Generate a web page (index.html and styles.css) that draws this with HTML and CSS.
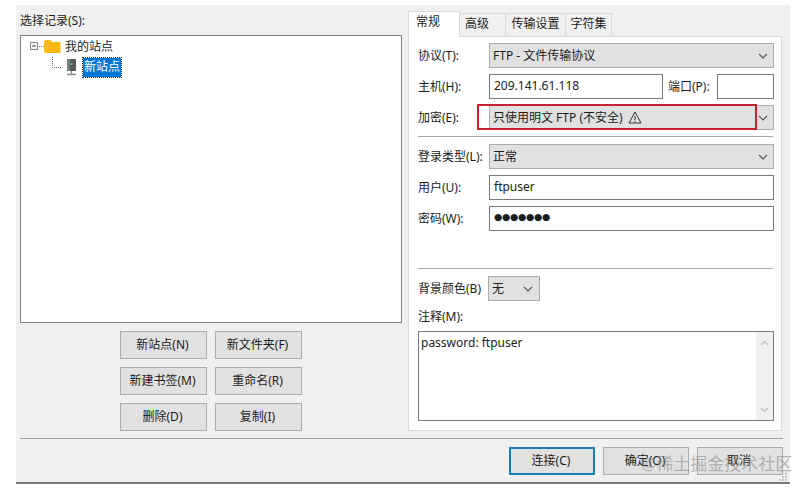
FILE: index.html
```html
<!DOCTYPE html>
<html lang="zh">
<head>
<meta charset="utf-8">
<title>站点管理器</title>
<link rel="stylesheet" href="styles.css">
</head>
<body>
<div class="window">
  <div class="main">
    <section class="left">
      <div class="caption">选择记录(S):</div>
      <div class="tree">
        <div class="node">
          <svg class="icon-root" width="32" height="20" viewBox="0 0 32 20">
            <rect x="0.5" y="5.5" width="7" height="7" fill="#f4f4f4" stroke="#8a8a8a"/>
            <path d="M2 9h4" stroke="#444"/>
            <path d="M9 9.5h5" stroke="#777" stroke-dasharray="1 1"/>
            <path d="M14 5q0-2 2-2h4q1 0 2 2h7q1.500 0 1.500 1.500v8q0 1.500-1.500 1.500h-13q-2 0-2-2z" fill="#fbb714"/>
          </svg>
          <span class="node-text">我的站点</span>
        </div>
        <div class="node node-child">
          <svg class="icon-site" width="29" height="20" viewBox="0 0 29 20">
            <path d="M0.500 0v10.500h9" fill="none" stroke="#666" stroke-dasharray="1 1"/>
            <rect x="15" y="2" width="9" height="12" rx="1" fill="#55585a"/>
            <rect x="15" y="2" width="3" height="12" fill="#7b7f80"/>
            <rect x="18.500" y="6" width="2" height="2" fill="#5fc25a"/>
            <path d="M19.500 14v3M15 17.500h9" stroke="#7d8a86" stroke-width="1.300"/>
          </svg>
          <span class="node-text selected">新站点</span>
        </div>
      </div>
      <div class="actions">
        <div class="btn">新站点(N)</div>
        <div class="btn">新文件夹(F)</div>
        <div class="btn">新建书签(M)</div>
        <div class="btn">重命名(R)</div>
        <div class="btn">删除(D)</div>
        <div class="btn">复制(I)</div>
      </div>
    </section>
    <section class="right">
      <div class="tabs">
        <div class="tab active">常规</div>
        <div class="tab tab-adv">高级</div>
        <div class="tab tab-trans">传输设置</div>
        <div class="tab tab-char">字符集</div>
      </div>
      <div class="panel">
        <div class="row">
          <label class="lbl">协议(T):</label>
          <div class="select"><span class="val">FTP - 文件传输协议</span><svg class="chev" width="10" height="6" viewBox="0 0 10 6"><path d="M1 1l4 4 4-4" fill="none" stroke="#555" stroke-width="1.100"/></svg></div>
        </div>
        <div class="row">
          <label class="lbl">主机(H):</label>
          <div class="input host">209.141.61.118</div>
          <label class="lbl port-lbl">端口(P):</label>
          <div class="input port"></div>
        </div>
        <div class="row">
          <label class="lbl">加密(E):</label>
          <div class="select"><span class="val">只使用明文 FTP (不安全)</span>
            <svg class="warn" width="14" height="13" viewBox="0 0 14 13"><path d="M7 1L13 12H1z" fill="none" stroke="#333"/><path d="M7 5v4M7 10v1" stroke="#333"/></svg>
            <svg class="chev" width="10" height="6" viewBox="0 0 10 6"><path d="M1 1l4 4 4-4" fill="none" stroke="#555" stroke-width="1.100"/></svg>
          </div>
        </div>
        <div class="rule rule-a"></div>
        <div class="row">
          <label class="lbl">登录类型(L):</label>
          <div class="select"><span class="val">正常</span><svg class="chev" width="10" height="6" viewBox="0 0 10 6"><path d="M1 1l4 4 4-4" fill="none" stroke="#555" stroke-width="1.100"/></svg></div>
        </div>
        <div class="row">
          <label class="lbl">用户(U):</label>
          <div class="input">ftpuser</div>
        </div>
        <div class="row">
          <label class="lbl">密码(W):</label>
          <div class="input dots">●●●●●●●</div>
        </div>
        <div class="rule rule-b"></div>
        <div class="row row-bg">
          <label class="lbl lbl-bg">背景颜色(B)</label>
          <div class="select select-small"><span class="val">无</span><svg class="chev" width="10" height="6" viewBox="0 0 10 6"><path d="M1 1l4 4 4-4" fill="none" stroke="#555" stroke-width="1.100"/></svg></div>
        </div>
        <div class="note-lbl">注释(M):</div>
        <div class="note">
          <div class="note-text">password: ftpuser</div>
          <div class="scrollbar">
            <svg width="9" height="6" viewBox="0 0 9 6"><path d="M1 5l3.500-3.500L8 5" fill="none" stroke="#c4c4c4" stroke-width="1.500"/></svg>
            <svg width="9" height="6" viewBox="0 0 9 6"><path d="M1 1l3.500 3.500L8 1" fill="none" stroke="#c4c4c4" stroke-width="1.500"/></svg>
          </div>
        </div>
      </div>
    </section>
  </div>
  <div class="divider"></div>
  <div class="footer">
    <div class="btn btn-primary">连接(C)</div>
    <div class="btn">确定(O)</div>
    <div class="btn">取消</div>
  </div>
  <div class="highlight"></div>
  <svg class="grip" width="10" height="10" viewBox="0 0 10 10"><path d="M7 1h2v2H7zM4 4h2v2H4zM7 4h2v2H7zM1 7h2v2H1zM4 7h2v2H4zM7 7h2v2H7z" fill="#c4c4c4"/></svg>
  <div class="watermark">@稀土掘金技术社区</div>
</div>
</body>
</html>
```
FILE: styles.css
```css
* { box-sizing: border-box; }
html, body { margin: 0; padding: 0; background: #fff; }
body {
  width: 810px;
  height: 489px;
  overflow: hidden;
  font-family: "Noto Sans", "Noto Sans CJK SC", sans-serif;
  font-size: 12px;
  color: #1c1c1c;
}
.window {
  position: relative;
  margin: 5px 20px 0 16px;
  width: 774px;
  height: 479px;
  padding: 0 7px 0 4px;
  background: #f0f0f0;
  border-bottom: 2px solid #777;
}
.main { display: flex; gap: 6px; }
.left { width: 382px; }
.caption { height: 30px; line-height: 17px; padding-top: 7px; }
.tree {
  height: 288px;
  background: #fff;
  border: 1px solid #828282;
  padding: 1px 0 0 9px;
}
.node { display: flex; align-items: center; height: 20px; }
.node-text { margin-left: 3px; line-height: 18px; }
.node-child { padding-left: 22px; }
.icon-site { margin-left: 0; flex: none; }
.selected {
  margin-left: 2px;
  padding: 0 1px;
  height: 19px;
  background: #0078d7;
  color: #fff;
  outline: 1px dotted #222;
}
.actions {
  display: grid;
  grid-template-columns: 87px 87px;
  grid-auto-rows: 28px;
  gap: 8px;
  justify-content: center;
  margin-top: 8px;
}
.btn {
  display: flex;
  align-items: center;
  justify-content: center;
  padding: 0 2px 2px 0;
  background: #e1e1e1;
  border: 1px solid #adadad;
}
.right { width: 374px; padding-top: 6px; }
.tabs { display: flex; height: 25px; align-items: flex-end; }
.tab {
  height: 23px;
  line-height: 19px;
  text-align: center;
  border: 1px solid #d9d9d9;
  border-bottom: none;
  margin-left: -1px;
  background: #f0f0f0;
}
.tab.active {
  position: relative;
  z-index: 1;
  height: 26px;
  width: 52px;
  margin: 0 0 -1px 0;
  padding-left: 7px;
  text-align: left;
  background: #fff;
  line-height: 20px;
}
.tab-adv { width: 47px; padding-left: 5px; text-align: left; }
.tab-trans { width: 61px; }
.tab-char { width: 47px; }
.panel {
  height: 395px;
  background: #fff;
  border: 1px solid #d9d9d9;
  padding: 6px 7px 0 9px;
}
.row { display: flex; align-items: center; height: 25px; margin-bottom: 6px; }
.lbl { width: 71px; flex: none; white-space: nowrap; padding-bottom: 2px; }
.select {
  flex: 1;
  display: flex;
  align-items: center;
  height: 25px;
  padding: 0 5px 0 3px;
  background: #e1e1e1;
  border: 1px solid #adadad;
}
.val { padding-bottom: 2px; }
.chev { margin-left: auto; margin-right: 0; flex: none; }
.warn { margin-left: 5px; flex: none; }
.input {
  flex: 1;
  height: 25px;
  line-height: 22px;
  padding-left: 4px;
  background: #fff;
  border: 1px solid #7a7a7a;
}
.host { flex: none; width: 174px; }
.port-lbl { width: auto; margin-left: 5px; margin-right: 6px; }
.port { flex: none; width: 57px; margin-left: auto; }
.dots {
  font-family: "DejaVu Sans", sans-serif;
  font-size: 9.500px;
  line-height: 20px;
  letter-spacing: -0.300px;
}
.rule { height: 1px; background: #a8a8a8; margin-right: 1px; }
.rule-a { margin-bottom: 7px; }
.rule-b { margin-top: 37px; margin-bottom: 7px; }
.row-bg { margin-bottom: 0; }
.lbl-bg { width: 70px; }
.select-small { flex: none; width: 52px; padding-left: 3px; padding-right: 6px; }
.note-lbl { height: 30px; line-height: 17px; padding-top: 7px; }
.note {
  display: flex;
  height: 90px;
  background: #fff;
  border: 1px solid #7a7a7a;
}
.note-text { flex: 1; padding: 2px 0 0 2px; line-height: 18px; }
.scrollbar {
  width: 17px;
  background: #f0f0f0;
  display: flex;
  flex-direction: column;
  align-items: center;
  justify-content: space-between;
  padding: 8px 0 7px;
}
.divider { height: 1px; background: #a0a0a0; margin-top: 7px; }
.footer {
  display: grid;
  grid-template-columns: repeat(3, 86px);
  grid-auto-rows: 28px;
  gap: 8px;
  justify-content: end;
  margin-top: 8px;
}
.btn-primary { border: 2px solid #1a7fb8; }
.highlight {
  position: absolute;
  left: 461px;
  top: 99px;
  width: 280px;
  height: 26px;
  border: 2px solid #c8202c;
  pointer-events: none;
}
.grip { position: absolute; left: 762px; top: 467px; }
.watermark {
  position: absolute;
  left: 625px;
  top: 448px;
  font-size: 17px;
  line-height: 22px;
  white-space: nowrap;
  color: rgba(130, 130, 130, 0.55);
}
```
